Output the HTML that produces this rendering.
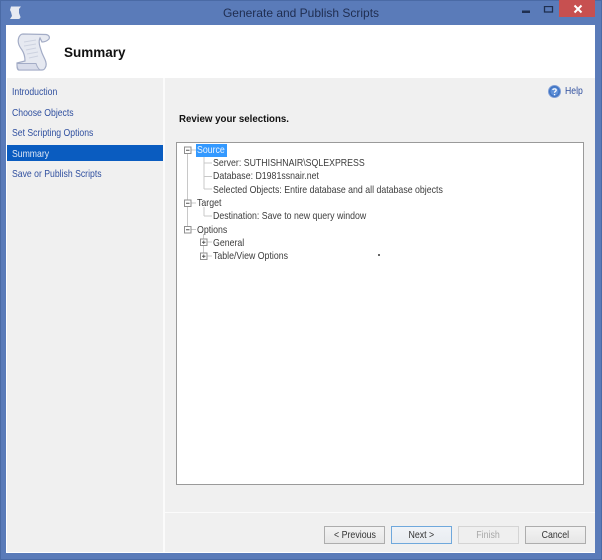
<!DOCTYPE html>
<html><head><meta charset="utf-8">
<style>
*{box-sizing:border-box}
html,body{margin:0;padding:0}
body{width:602px;height:560px;position:relative;overflow:hidden;background:#5a7bb9;font-family:"Liberation Sans",sans-serif;font-size:10px;color:#333}
.a{position:absolute;white-space:nowrap}
.nav{color:#2f4f9f;font-size:10.5px;left:12px;line-height:12px;transform:scaleX(.825);transform-origin:0 0}
.t{font-size:10.5px;line-height:12px;color:#3c3c3c;transform:scaleX(.836);transform-origin:0 0}
.btn{position:absolute;top:526px;width:61px;height:18px;border:1px solid #adadad;background:linear-gradient(#f3f3f3,#e6e6e6);font-size:10.5px;line-height:17px;text-align:center;color:#333}
.btn span{display:inline-block;transform:scaleX(.84)}
</style></head><body>
<div class="a" style="left:0;top:0;width:602px;height:560px;border:1px solid #4a6aa5"></div>
<div class="a" style="left:0;top:0;width:602px;text-align:center;line-height:26px;font-size:12px;color:#1f2d50">Generate and Publish Scripts</div>
<svg class="a" style="left:9px;top:6px" width="13" height="13" viewBox="0 0 13 13"><path d="M2 .5h10l-2 2.500v4l1.500 4c0 1-1 2-2 2H1l2-3-1-4L1 4z" fill="#e6e9f2"/></svg>
<svg class="a" style="left:519px;top:6px" width="40" height="12" viewBox="0 0 40 12"><rect x="3" y="4.500" width="8" height="2.500" fill="#1f2f50"/><rect x="25.500" y=".5" width="8" height="5.500" fill="none" stroke="#1f2f50" stroke-width="1.300"/></svg>
<div class="a" style="left:559px;top:0;width:36px;height:17px;background:#c75050"></div>
<svg class="a" style="left:573px;top:4px" width="10" height="10" viewBox="0 0 10 10"><path d="M1.500 1.500l7 7M8.500 1.500l-7 7" stroke="#fff" stroke-width="2"/></svg>

<div class="a" style="left:6px;top:25px;width:589px;height:528px;background:#f0f0f0"></div>
<div class="a" style="left:7px;top:25px;width:588px;height:53px;background:#fff"></div>
<div class="a" style="left:6px;top:25px;width:1px;height:528px;background:#fff"></div>
<div class="a" style="left:6px;top:552px;width:589px;height:1px;background:#fff"></div>
<div class="a" style="left:163px;top:78px;width:2px;height:474px;background:#fbfbfb"></div>
<div class="a" style="left:165px;top:512px;width:430px;height:1px;background:#fbfbfb"></div>

<svg class="a" style="left:16px;top:33px" width="36" height="39" viewBox="0 0 36 39">
<path d="M7 1L30 1.500C33 2 34 4 33 6C31 8 28 9 26 9L24 5C22 9 24 14 26 20C28 25 31 29 30 33C29 36 28 37 26 37L3 37C1 37 1 34 1 30L9 28C9 24 8 20 6 17C3 13 1 9 3 4C4 2 5 1 7 1z" fill="#e6e9f1" stroke="#a3acc6" stroke-width="1.200"/>
<path d="M1 30.500H20c1 3 2 5 4 6.500H3C1 36 1 33 1 30.500z" fill="#d8dcea" stroke="#a3acc6" stroke-width="1"/>
<path d="M8 9l12-2M8 13l12-2M10 17l10-2M11 21l11-2M13 25l9-2" stroke="#cdd2e0" stroke-width="1"/>
</svg>
<div class="a" style="left:64px;top:45px;font-size:13.500px;font-weight:bold;color:#111;line-height:15px">Summary</div>

<div class="a nav" style="top:86px">Introduction</div>
<div class="a nav" style="top:107px">Choose Objects</div>
<div class="a nav" style="top:127px">Set Scripting Options</div>
<div class="a" style="left:7px;top:145px;width:156px;height:16px;background:#0a5cc0"></div>
<div class="a nav" style="top:148px;color:#dfe8f6">Summary</div>
<div class="a nav" style="top:168px">Save or Publish Scripts</div>

<svg class="a" style="left:548px;top:85px" width="13" height="13" viewBox="0 0 13 13"><circle cx="6.500" cy="6.500" r="6" fill="#3f74c4" stroke="#7f9ed6"/><circle cx="6.500" cy="6.500" r="4" fill="#5f90d8"/><path d="M4.800 5c.3-1.500 3.400-1.500 3.400.2 0 1.200-1.700 1.200-1.700 2.600" fill="none" stroke="#fff" stroke-width="1.300"/><rect x="5.900" y="9" width="1.300" height="1.300" fill="#fff"/></svg>
<div class="a nav" style="left:565px;top:85px">Help</div>

<div class="a" style="left:179px;top:112px;font-size:10px;font-weight:bold;color:#111;line-height:12px;transform:scaleX(.97) translateY(2px);transform-origin:0 0">Review your selections.</div>

<div class="a" style="left:176px;top:142px;width:408px;height:343px;background:#fff;border:1px solid #9a9a9a"></div>

<svg class="a" style="left:184px;top:144px" width="40" height="120" viewBox="0 0 40 120">
<g stroke="#c8c8c8" fill="none" stroke-width="1">
<path d="M3.500 9V83M7 6h5M7 59h5M7 85.500h5M20 13v32M20 19h8M20 32.500h8M20 45h8M20 63v9M20 72h8M19.500 90v19M23 98h5M23 112h5"/>
</g>
<g fill="#fff" stroke="#8f8f8f">
<rect x=".5" y="3" width="6.500" height="6.500"/><rect x=".5" y="56" width="6.500" height="6.500"/><rect x=".5" y="82.500" width="6.500" height="6.500"/>
<rect x="16.500" y="95" width="6.500" height="6.500"/><rect x="16.500" y="109" width="6.500" height="6.500"/>
</g>
<path d="M2 6.250h3.500M2 59.250h3.500M2 85.750h3.500M18 98.250h3.500M19.750 96.500v3.500M18 112.250h3.500M19.750 110.500v3.500" stroke="#555" stroke-width=".9"/>
</svg>

<div class="a" style="left:196px;top:144px;width:31px;height:13px;background:#3399ff"></div>
<div class="a t" style="left:197px;top:144px;color:#eaf3ff">Source</div>
<div class="a t" style="left:213px;top:157px">Server: SUTHISHNAIR\SQLEXPRESS</div>
<div class="a t" style="left:213px;top:170px">Database: D1981ssnair.net</div>
<div class="a t" style="left:213px;top:184px">Selected Objects: Entire database and all database objects</div>
<div class="a t" style="left:197px;top:197px">Target</div>
<div class="a t" style="left:213px;top:210px">Destination: Save to new query window</div>
<div class="a t" style="left:197px;top:224px">Options</div>
<div class="a t" style="left:213px;top:237px">General</div>
<div class="a t" style="left:213px;top:250px">Table/View Options</div>
<div class="a" style="left:378px;top:254px;width:2px;height:2px;background:#666"></div>

<div class="btn" style="left:324px"><span>&lt; Previous</span></div>
<div class="btn" style="left:391px;border-color:#6fa8dc;background:linear-gradient(#f0f3f7,#e8ecf1)"><span>Next &gt;</span></div>
<div class="btn" style="left:458px;border-color:#d4d4d4;background:#efefef;color:#a8a8a8"><span>Finish</span></div>
<div class="btn" style="left:525px"><span>Cancel</span></div>
</body></html>
